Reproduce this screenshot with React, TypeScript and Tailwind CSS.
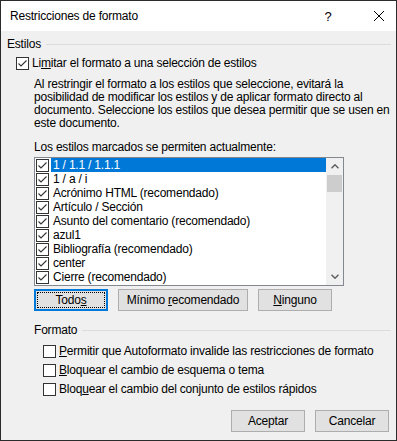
import type { ReactNode } from 'react';

const styles = [
  '1 / 1.1 / 1.1.1',
  '1 / a / i',
  'Acrónimo HTML (recomendado)',
  'Artículo / Sección',
  'Asunto del comentario (recomendado)',
  'azul1',
  'Bibliografía (recomendado)',
  'center',
  'Cierre (recomendado)',
];

function CheckBox({ checked }: { checked?: boolean }) {
  return (
    <span className="w-[13px] h-[13px] shrink-0 border border-[#333333] bg-white flex items-center justify-center">
      {checked && (
        <svg width="11" height="11" viewBox="0 0 11 11">
          <path d="M1.5 5.5 L4 8 L9.5 2.5" fill="none" stroke="#333333" strokeWidth="1.1" />
        </svg>
      )}
    </span>
  );
}

function Chevron({ down }: { down?: boolean }) {
  return (
    <svg width="8" height="5" viewBox="0 0 8 5">
      <path
        d={down ? 'M0.5 0.8 L4 4.2 L7.5 0.8' : 'M0.5 4.2 L4 0.8 L7.5 4.2'}
        fill="none"
        stroke="#606060"
        strokeWidth="1.5"
      />
    </svg>
  );
}

function Legend({ children }: { children: ReactNode }) {
  return (
    <div className="h-[15px] flex items-center gap-[5px]">
      <span>{children}</span>
      <div className="flex-1 h-px bg-[#dcdcdc]" />
    </div>
  );
}

function Button({ children, className }: { children: ReactNode; className: string }) {
  return (
    <button className={`h-[22px] border border-[#adadad] bg-[#e1e1e1] flex items-center justify-center ${className}`}>
      <span>{children}</span>
    </button>
  );
}

export default function App() {
  return (
    <div className="w-[397px] h-[441px] border border-[#2b2b2b] bg-[#f0f0f0] flex flex-col overflow-hidden text-[12px] leading-[15px] text-black tracking-[-0.2px] [font-family:'Liberation_Sans',Arial,sans-serif]">
      {/* Barra de título */}
      <div className="h-[30px] bg-white flex items-center pl-[9px]">
        <span className="flex-1">Restricciones de formato</span>
        <span className="w-[30px] text-center text-[13px]">?</span>
        <span className="w-[20px] ml-[26px] mr-[7px] flex items-center justify-center">
          <svg width="10" height="10" viewBox="0 0 10 10">
            <path d="M0 0 L10 10 M10 0 L0 10" stroke="#000" strokeWidth="1" />
          </svg>
        </span>
      </div>

      <div className="flex flex-col pl-[6px] pr-[5px]">
        {/* Estilos */}
        <div className="mt-[6px]">
          <Legend>Estilos</Legend>
        </div>
        <div className="mt-[5px] ml-[9px] h-[13px] flex items-center gap-[3px]">
          <CheckBox checked />
          <span>
            Li<span className="underline">m</span>itar el formato a una selección de estilos
          </span>
        </div>

        <div className="pl-[27px] flex flex-col">
          <p className="mt-[8px] leading-[13px] whitespace-nowrap">
            Al restringir el formato a los estilos que seleccione, evitará la
            <br />
            posibilidad de modificar los estilos y de aplicar formato directo al
            <br />
            documento. Seleccione los estilos que desea permitir que se usen en
            <br />
            este documento.
          </p>
          <p className="mt-[11px] leading-[13px]">Los estilos marcados se permiten actualmente:</p>

          {/* Lista de estilos */}
          <div className="mt-[3px] w-[310px] h-[129px] border border-[#828790] bg-white flex">
            <div className="flex-1 flex flex-col">
              {styles.map((name, idx) => (
                <div key={name} className="h-[14px] flex items-center">
                  <span className="ml-[1px]">
                    <CheckBox checked />
                  </span>
                  <span
                    className={`ml-[2px] flex-1 h-full pl-[2px] flex items-center ${
                      idx === 0 ? 'bg-[#0078d7] text-white' : ''
                    }`}
                  >
                    {name}
                  </span>
                </div>
              ))}
            </div>
            <div className="w-[17px] bg-[#f0f0f0] flex flex-col">
              <div className="h-[17px] flex items-center justify-center">
                <Chevron />
              </div>
              <div className="h-[17px] mx-[1px] bg-[#cdcdcd]" />
              <div className="flex-1" />
              <div className="h-[17px] flex items-center justify-center">
                <Chevron down />
              </div>
            </div>
          </div>

          <div className="mt-[3px] flex gap-[10px]">
            <button className="w-[74px] h-[22px] border-2 border-[#0078d7] bg-[#e1e1e1] p-[1px] flex">
              <span className="flex-1 border border-dotted border-black flex items-center justify-center">
                <span>
                  Todo<span className="underline">s</span>
                </span>
              </span>
            </button>
            <Button className="w-[130px]">
              Mínimo <span className="underline">r</span>ecomendado
            </Button>
            <Button className="w-[74px]">
              <span className="underline">N</span>inguno
            </Button>
          </div>

          {/* Formato */}
          <div className="mt-[12px]">
            <Legend>Formato</Legend>
          </div>
          <div className="mt-[4px] ml-[9px] flex flex-col">
            <div className="h-[19px] flex items-center gap-[3px]">
              <CheckBox />
              <span>
                <span className="underline">P</span>ermitir que Autoformato invalide las restricciones de formato
              </span>
            </div>
            <div className="h-[19px] flex items-center gap-[3px]">
              <CheckBox />
              <span>
                <span className="underline">B</span>loquear el cambio de esquema o tema
              </span>
            </div>
            <div className="h-[19px] flex items-center gap-[3px]">
              <CheckBox />
              <span>
                Bloq<span className="underline">u</span>ear el cambio del conjunto de estilos rápidos
              </span>
            </div>
          </div>
        </div>

        <div className="mt-[11px] mr-[2px] flex justify-end gap-[10px]">
          <Button className="w-[74px]">Aceptar</Button>
          <Button className="w-[74px]">Cancelar</Button>
        </div>
      </div>
    </div>
  );
}
